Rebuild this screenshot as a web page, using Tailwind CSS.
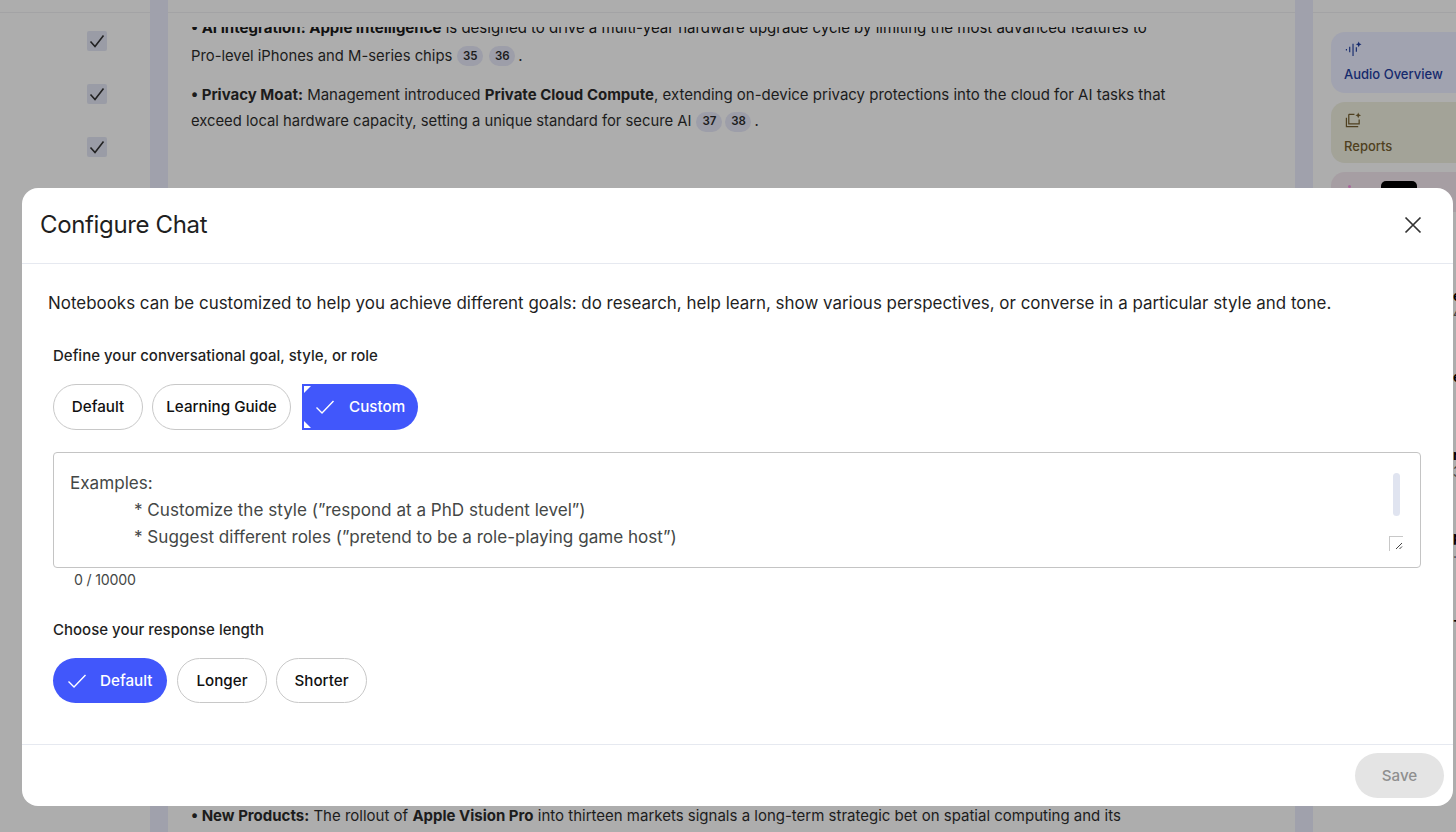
<!doctype html>
<html>
<head>
<meta charset="utf-8">
<script src="https://cdn.jsdelivr.net/npm/@tailwindcss/browser@4"></script>
</head>
<body class="m-0 overflow-hidden">
<div class="relative w-[1456px] h-[832px] overflow-hidden bg-[#adadad] font-['Inter',sans-serif] text-[#111]">
  <!-- background page -->
  <div class="flex h-full">
    <div class="w-[150px] shrink-0 flex flex-col">
      <div class="h-[13px] border-b border-[#a3a3a5]"></div>
      <div class="flex flex-col items-center pl-[43px] pt-[18px] gap-[33px]">
        <div class="w-[20px] h-[20px] rounded-[2px] bg-[#9a9ca6] flex items-center justify-center"><svg width="16" height="14" viewBox="0 0 16 14" fill="none" stroke="#222" stroke-width="1.6"><path d="M1.5 7.5L6 12.5L14.5 1.5"/></svg></div>
        <div class="w-[20px] h-[20px] rounded-[2px] bg-[#9a9ca6] flex items-center justify-center"><svg width="16" height="14" viewBox="0 0 16 14" fill="none" stroke="#222" stroke-width="1.6"><path d="M1.5 7.5L6 12.5L14.5 1.5"/></svg></div>
        <div class="w-[20px] h-[20px] rounded-[2px] bg-[#9a9ca6] flex items-center justify-center"><svg width="16" height="14" viewBox="0 0 16 14" fill="none" stroke="#222" stroke-width="1.6"><path d="M1.5 7.5L6 12.5L14.5 1.5"/></svg></div>
      </div>
    </div>
    <div class="w-[18px] shrink-0 bg-[#a0a1ac]"></div>
    <div class="w-[1127px] shrink-0 flex flex-col">
      <div class="h-[13px] border-b border-[#a3a3a5] shrink-0"></div>
      <div class="mt-[14px] h-[10px] overflow-hidden shrink-0 relative">
        <div class="absolute left-[23px] top-[-12px] whitespace-nowrap text-[15px] leading-[26px]"><b class="font-bold">• AI Integration: Apple Intelligence</b> is designed to drive a multi-year hardware upgrade cycle by limiting the most advanced features to</div>
      </div>
      <div class="pl-[23px] text-[15px] leading-[27px] text-[#1c1c1c]">
        <p class="mt-[4px] flex items-center h-[30px] whitespace-nowrap text-[14.8px]">Pro-level iPhones and M-series chips
          <span class="ml-[5px] w-[26px] h-[20px] rounded-full bg-[#9d9ea9] text-[11.5px] font-semibold flex items-center justify-center">35</span>
          <span class="ml-[6px] w-[26px] h-[20px] rounded-full bg-[#9d9ea9] text-[11.5px] font-semibold flex items-center justify-center">36</span>
          <span class="ml-[3px]">.</span>
        </p>
        <p class="mt-[10px] whitespace-nowrap"><b class="font-bold">• Privacy Moat:</b> Management introduced <b class="font-bold">Private Cloud Compute</b>, extending on-device privacy protections into the cloud for AI tasks that</p>
        <p class="flex items-center h-[27px] whitespace-nowrap text-[14.8px]">exceed local hardware capacity, setting a unique standard for secure AI
          <span class="ml-[5px] w-[26px] h-[20px] rounded-full bg-[#9d9ea9] text-[11.5px] font-semibold flex items-center justify-center">37</span>
          <span class="ml-[3px] w-[26px] h-[20px] rounded-full bg-[#9d9ea9] text-[11.5px] font-semibold flex items-center justify-center">38</span>
          <span class="ml-[3px]">.</span>
        </p>
        <p class="mt-[667px] whitespace-nowrap"><b class="font-bold">• New Products:</b> The rollout of <b class="font-bold">Apple Vision Pro</b> into thirteen markets signals a long-term strategic bet on spatial computing and its</p>
      </div>
    </div>
    <div class="w-[18px] shrink-0 bg-[#a0a1ac]"></div>
    <div class="flex-1 flex flex-col">
      <div class="h-[13px] border-b border-[#a3a3a5] shrink-0"></div>
      <div class="pl-[18px] pt-[19px] flex flex-col gap-[9px]">
        <div class="h-[61px] w-[140px] rounded-l-[14px] bg-[#a1a3b0] pl-[14px] pt-[9px] text-[#152a6d]">
          <svg width="17" height="17" viewBox="0 0 18 18" fill="none" stroke="#152a6d" stroke-width="1.2"><path d="M1.5 8.5v1.5M5 6v6M8.5 3v13M12 6.5v5"/><path d="M14.5 0.5l.9 2.1 2.1.9-2.1.9-.9 2.1-.9-2.1-2.1-.9 2.1-.9z" fill="#152a6d" stroke="none"/></svg>
          <div class="mt-[7px] -ml-px text-[13px] leading-[18px] font-medium whitespace-nowrap">Audio Overview</div>
        </div>
        <div class="h-[61px] w-[140px] rounded-l-[14px] bg-[#a3a398] pl-[14px] pt-[10px] text-[#4f4020]">
          <svg width="17" height="17" viewBox="0 0 18 18" fill="none" stroke="#4f4020" stroke-width="1.3"><path d="M4 2.5H10M4 2.5V12.5H15V8"/><path d="M1.5 6v9.5H14"/><path d="M14 0.5l.9 2.1 2.1.9-2.1.9-.9 2.1-.9-2.1-2.1-.9 2.1-.9z" fill="#4f4020" stroke="none"/></svg>
          <div class="mt-[8px] -ml-px text-[13px] leading-[18px] font-medium whitespace-nowrap">Reports</div>
        </div>
        <div class="h-[40px] w-[140px] rounded-l-[14px] bg-[#a69ea3] relative">
          <div class="absolute left-[50px] top-[9px] w-[36px] h-[20px] rounded-[5px] bg-black"></div>
          <div class="absolute left-[17px] top-[13px] w-[3px] h-[3px] rounded-full bg-[#a8689a]"></div>
        </div>
      </div>
    </div>
  </div>

  <!-- fragments of the right panel beyond the modal -->
  <div class="absolute left-[1453px] top-[262px] w-[3px] h-[400px] overflow-hidden text-[14px] leading-[16px] text-black">
    <div class="absolute top-[26px] font-bold">e</div>
    <div class="absolute top-[43px] text-[#444]">4</div>
    <div class="absolute top-[107px] font-bold">e</div>
    <div class="absolute top-[185px] font-bold">n</div>
    <div class="absolute top-[202px] text-[#444]">3</div>
    <div class="absolute top-[267px] font-bold">p</div>
    <div class="absolute top-[283px] text-[#444]">.</div>
    <div class="absolute top-[350px] font-bold">-</div>
  </div>

  <!-- modal -->
  <div class="absolute left-[22px] top-[188px] w-[1431px] h-[618px] bg-white rounded-[16px] flex flex-col">
    <header class="h-[76px] pb-[2px] shrink-0 border-b border-[#e6e9f0] flex items-center justify-between pl-[18px] pr-[31px]">
      <h2 class="text-[24px] leading-[32px] font-normal tracking-[-0.35px] text-[#1f1f1f]">Configure Chat</h2>
      <svg width="18" height="18" viewBox="0 0 18 18" fill="none" stroke="#333" stroke-width="1.7"><path d="M1.5 1.5L16.5 16.5M16.5 1.5L1.5 16.5"/></svg>
    </header>
    <div class="flex-1 flex flex-col">
      <p class="ml-[26px] mt-[27px] text-[16.94px] leading-[24px] text-[#1f1f1f] whitespace-nowrap">Notebooks can be customized to help you achieve different goals: do research, help learn, show various perspectives, or converse in a particular style and tone.</p>
      <h3 class="ml-[31px] mt-[31px] text-[15px] leading-[20px] font-medium text-[#1f1f1f]">Define your conversational goal, style, or role</h3>
      <div class="ml-[31px] mt-[18px] flex">
        <button class="w-[90px] h-[46px] rounded-full border border-[#c8c8c8] bg-white text-[15.2px] font-medium text-[#111]">Default</button>
        <button class="ml-[9px] w-[139px] h-[46px] rounded-full border border-[#c8c8c8] bg-white text-[15.2px] font-medium text-[#111]">Learning Guide</button>
        <button class="relative ml-[11px] w-[116px] h-[46px] rounded-r-full rounded-l-[23px] bg-[#4157fb] text-white text-[15.2px] font-medium flex items-center pl-[13px] gap-[14px]">
          <span class="absolute left-0 top-0 w-[9px] h-[9px] bg-[#4157fb]"></span>
          <span class="absolute left-0 bottom-0 w-[9px] h-[9px] bg-[#4157fb]"></span>
          <span class="absolute left-[2px] top-[2px] w-0 h-0 border-t-[7px] border-r-[7px] border-t-white border-r-transparent"></span>
          <span class="absolute left-[2px] bottom-[2px] w-0 h-0 border-b-[7px] border-r-[7px] border-b-white border-r-transparent"></span>
          <svg class="relative" width="20" height="16" viewBox="0 0 20 16" fill="none" stroke="white" stroke-width="1.4"><path d="M1.5 8.5L7 14L18.5 2"/></svg>
          <span class="relative">Custom</span>
        </button>
      </div>
      <div class="relative ml-[31px] mt-[22px] w-[1368px] h-[116px] rounded-[4px] border border-[#c4c4c4] pl-[16px] pt-[16px] text-[17.1px] leading-[27px] text-[#444746]">
        <div>Examples:</div>
        <div class="pl-[64px] whitespace-nowrap">* Customize the style (”respond at a PhD student level”)</div>
        <div class="pl-[64px] whitespace-nowrap">* Suggest different roles (”pretend to be a role-playing game host”)</div>
        <div class="absolute right-[20px] top-[20px] w-[7px] h-[43px] rounded-full bg-[#e0e4f0]"></div>
        <div class="absolute right-[17px] bottom-[16px] w-[14px] h-[15px] border-l border-t border-[#c8c8c8]">
          <svg class="absolute left-[5px] top-[5px]" width="8" height="8" viewBox="0 0 8 8" fill="none" stroke="#444" stroke-width="1"><path d="M1 7L7 1M4.5 7L7 4.5"/></svg>
        </div>
      </div>
      <div class="ml-[52px] mt-[3px] text-[14.2px] leading-[18px] tracking-[-0.2px] text-[#444746]">0 / 10000</div>
      <h3 class="ml-[31px] mt-[31px] text-[15px] leading-[20px] font-medium text-[#1f1f1f]">Choose your response length</h3>
      <div class="ml-[31px] mt-[18px] flex">
        <button class="w-[114px] h-[45px] rounded-full bg-[#4157fb] text-white text-[15.2px] font-medium flex items-center pl-[14px] gap-[13px]">
          <svg width="20" height="16" viewBox="0 0 20 16" fill="none" stroke="white" stroke-width="1.4"><path d="M1.5 8.5L7 14L18.5 2"/></svg>
          <span class="pt-px">Default</span>
        </button>
        <button class="ml-[10px] w-[90px] h-[45px] pt-px rounded-full border border-[#c8c8c8] bg-white text-[15.2px] font-medium text-[#111]">Longer</button>
        <button class="ml-[9px] w-[91px] h-[45px] pt-px rounded-full border border-[#c8c8c8] bg-white text-[15.2px] font-medium text-[#111]">Shorter</button>
      </div>
    </div>
    <footer class="h-[62px] shrink-0 border-t border-[#e6e9f0] flex items-center justify-end pr-[9px]">
      <button class="w-[89px] h-[45px] pt-px rounded-full bg-[#e4e4e4] text-[15.2px] font-medium text-[#8f8f8f]">Save</button>
    </footer>
  </div>
</div>
</body>
</html>
